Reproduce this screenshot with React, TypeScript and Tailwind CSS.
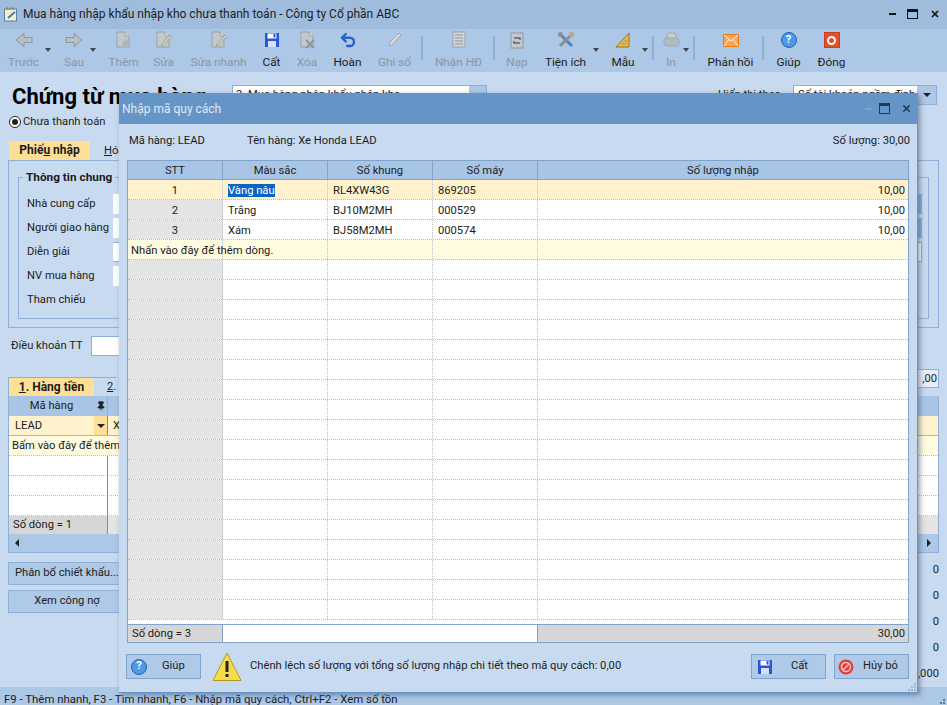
import { Pin, Undo2, X } from 'lucide-react';

const font = { fontFamily: 'Roboto, sans-serif' };

function Tool({ icon, label, off, caret, className }: { icon: React.ReactNode; label: string; off?: boolean; caret?: boolean; className: string }) {
  return (
    <div className={`relative flex h-[40px] shrink-0 flex-col items-center justify-between ${className} ${off ? 'text-[#8996a5]' : 'text-[#1c1c1c]'}`}>
      <div className="flex h-[20px] items-center">{icon}</div>
      <span className="text-[11.8px] leading-[16px] whitespace-nowrap">{label}</span>
      {caret && <span className="absolute top-[18px] right-[-13px] h-0 w-0 border-x-[3px] border-t-[4px] border-x-transparent border-t-[#444]" />}
    </div>
  );
}

function Sep({ className }: { className: string }) {
  return <div className={`mt-[6px] h-[24px] w-[2px] shrink-0 bg-[#8fb0d6] ${className}`} />;
}

function FloppyIcon() {
  return (
    <svg width="16" height="16" viewBox="0 0 16 16">
      <rect x="1" y="1" width="14" height="14" fill="#2b55d8" />
      <rect x="3.5" y="1.5" width="9" height="5" fill="#fff" />
      <rect x="4" y="9" width="8" height="6" fill="#d6e2f2" />
      <rect x="9.5" y="2" width="2" height="3.5" fill="#2b55d8" />
    </svg>
  );
}

function BlockArrow({ right }: { right?: boolean }) {
  return (
    <svg width="18" height="16" viewBox="0 0 18 16" className={right ? '' : '-scale-x-100'}>
      <path d="M1 5.5 H9 V1.5 L17 8 L9 14.5 V10.5 H1 Z" fill="#b9bfc2" stroke="#8d979d" strokeWidth="1" />
    </svg>
  );
}

function PageIcon({ badge }: { badge?: 'plus' | 'pen' | 'x' }) {
  return (
    <svg width="17" height="18" viewBox="0 0 17 18">
      <path d="M2 1 H10 L14 5 V16 H2 Z" fill="#c3c8cb" stroke="#99a2a7" />
      <path d="M10 1 V5 H14" fill="#e3e6e8" stroke="#99a2a7" />
      {badge === 'plus' && <circle cx="11.5" cy="13" r="4" fill="#aeb6ba" />}
      {badge === 'pen' && <path d="M7 13 L15 4 L16.5 5.5 L8.5 14.5 L6.5 15 Z" fill="#e1d9a8" stroke="#99a2a7" />}
      {badge === 'x' && <path d="M7 9 L15 17 M15 9 L7 17" stroke="#8f979c" strokeWidth="2" />}
    </svg>
  );
}

function HelpIcon() {
  return (
    <span className="flex h-[16px] w-[16px] items-center justify-center rounded-full border border-[#1f5fb8] bg-[#4f9ae8] text-[11px] font-bold text-white">?</span>
  );
}

const rows = [
  { stt: '1', mau: 'Vàng nâu', khung: 'RL4XW43G', may: '869205', sl: '10,00' },
  { stt: '2', mau: 'Trắng', khung: 'BJ10M2MH', may: '000529', sl: '10,00' },
  { stt: '3', mau: 'Xám', khung: 'BJ58M2MH', may: '000574', sl: '10,00' },
];

const dotted = 'border-b border-dotted border-b-[#bdbdbd]';
const dottedR = 'border-r border-dotted border-r-[#bdbdbd]';

function Dialog() {
  return (
    <div className="absolute top-[93px] left-[119px] flex h-[600px] w-[799px] flex-col border-r border-b border-[#6595c6] bg-[#c8daf0] shadow-[2px_2px_5px_rgba(60,80,110,0.55)]">
      <div className="flex h-[31px] shrink-0 items-center bg-[#6595c6] pr-[5px] pl-[3px] text-[#e0e8f2]">
        <span className="text-[12px]">Nhập mã quy cách</span>
        <div className="ml-auto flex items-center text-[#26384c]">
          <div className="h-[2px] w-[7px] bg-[#7fa3cb]" />
          <div className="ml-[7px] h-[11px] w-[11px] border border-t-[3px] border-[#26384c]" />
          <X size={11} strokeWidth={3.5} className="ml-[11px]" />
        </div>
      </div>

      <div className="flex h-[36px] shrink-0 items-center justify-between pr-[7px] pb-[2px] pl-[10px] text-[#1c1c1c]">
        <div className="flex">
          <span className="w-[118px]">Mã hàng: LEAD</span>
          <span>Tên hàng: Xe Honda LEAD</span>
        </div>
        <span>Số lượng: 30,00</span>
      </div>

      <div className="mx-[8px] flex h-[483px] w-[782px] flex-col border border-[#7fa3cb] bg-white text-[#1c1c1c]">
        <div className="flex h-[19px] shrink-0 border-b border-[#7fa3cb] bg-[#a9c5e6]">
          <div className="w-[95px] border-r border-[#7fa3cb] text-center leading-[20px]">STT</div>
          <div className="w-[105px] border-r border-[#7fa3cb] text-center leading-[20px]">Màu sắc</div>
          <div className="w-[105px] border-r border-[#7fa3cb] text-center leading-[20px]">Số khung</div>
          <div className="w-[105px] border-r border-[#7fa3cb] text-center leading-[20px]">Số máy</div>
          <div className="flex-1 text-center leading-[20px]">Số lượng nhập</div>
        </div>

        <div className="flex-1 overflow-hidden">
          {rows.map((r, i) => (
            <div key={r.stt} className={`flex h-[20px] ${dotted} ${i === 0 ? 'bg-[#fff2cc]' : ''}`}>
              <div className={`w-[95px] text-center leading-[22px] ${dottedR} ${i === 0 ? '' : 'bg-[#e4e4e4]'}`}>{r.stt}</div>
              <div className={`w-[105px] pl-[5px] leading-[22px] ${dottedR}`}>
                {i === 0 ? <span className="bg-[#0a64c8] text-white">{r.mau}</span> : r.mau}
              </div>
              <div className={`w-[105px] pl-[5px] leading-[22px] ${dottedR}`}>{r.khung}</div>
              <div className={`w-[105px] pl-[5px] leading-[22px] ${dottedR}`}>{r.may}</div>
              <div className="flex-1 pr-[3px] text-right leading-[22px]">{r.sl}</div>
            </div>
          ))}
          <div className={`flex h-[20px] bg-[#fffbe0] ${dotted}`}>
            <div className={`w-[95px] pl-[3px] leading-[22px] whitespace-nowrap ${dottedR}`}>Nhấn vào đây để thêm dòng.</div>
            <div className={`w-[105px] ${dottedR}`} />
            <div className={`w-[105px] ${dottedR}`} />
            <div className={`w-[105px] ${dottedR}`} />
          </div>
          {Array.from({ length: 18 }).map((_, i) => (
            <div key={i} className={`flex h-[20px] ${dotted}`}>
              <div className={`w-[95px] bg-[#e4e4e4] ${dottedR}`} />
              <div className={`w-[105px] ${dottedR}`} />
              <div className={`w-[105px] ${dottedR}`} />
              <div className={`w-[105px] ${dottedR}`} />
            </div>
          ))}
        </div>

        <div className="flex h-[18px] shrink-0 border-t border-[#7fa3cb] leading-[18px]">
          <div className="w-[95px] border-r border-[#7fa3cb] bg-[#d6d6d6] pl-[4px]">Số dòng = 3</div>
          <div className="w-[315px] border-r border-[#7fa3cb]" />
          <div className="flex-1 bg-[#d6d6d6] pr-[3px] text-right">30,00</div>
        </div>
      </div>

      <div className="flex flex-1 items-center pr-[8px] pb-[2px] pl-[7px] text-[#1c1c1c]">
        <button className="flex h-[25px] w-[75px] items-center border border-[#7fa3cb] bg-[#afc9e8] pl-[4px]">
          <HelpIcon />
          <span className="ml-[15px]">Giúp</span>
        </button>
        <svg width="30" height="30" viewBox="0 0 30 30" className="ml-[11px]">
          <path d="M15 1 L29 28.5 L1 28.5 Z" fill="#f7dc4a" stroke="#b89a20" strokeWidth="1" />
          <rect x="13.5" y="9" width="3" height="11" fill="#222" />
          <rect x="13.5" y="22" width="3" height="3" fill="#222" />
        </svg>
        <span className="ml-[8px]">Chênh lệch số lượng với tổng số lượng nhập chi tiết theo mã quy cách: 0,00</span>
        <button className="ml-auto flex h-[25px] w-[75px] items-center border border-[#7fa3cb] bg-[#afc9e8] pl-[5px]">
          <FloppyIcon />
          <span className="ml-[18px]">Cất</span>
        </button>
        <button className="ml-[8px] flex h-[25px] w-[75px] items-center border border-[#7fa3cb] bg-[#afc9e8] pl-[3px]">
          <svg width="16" height="16" viewBox="0 0 16 16">
            <circle cx="8" cy="8" r="7.5" fill="#e0403c" />
            <circle cx="8" cy="8" r="4.5" fill="none" stroke="#f6c0bc" strokeWidth="1.5" />
            <path d="M5 11 L11 5" stroke="#f6c0bc" strokeWidth="1.5" />
          </svg>
          <span className="ml-[9px]">Hủy bỏ</span>
        </button>
      </div>
      <div className="absolute right-[1px] bottom-[1px] grid grid-cols-3 gap-[1px]">
        {[0, 0, 1, 0, 1, 1, 1, 1, 1].map((v, i) => (
          <span key={i} className={`h-[2px] w-[2px] ${v ? 'bg-[#9db6d3]' : ''}`} />
        ))}
      </div>
    </div>
  );
}

export default function App() {
  return (
    <div style={font} className="relative flex h-[705px] w-[947px] flex-col overflow-hidden bg-[#c8daf0] text-[11.2px] text-[#1c1c1c]">
      {/* Thanh tiêu đề */}
      <div className="flex h-[29px] shrink-0 items-center bg-[#a0bcdc] pr-[7px] pb-[2px] pl-[3px]">
        <svg width="16" height="16" viewBox="0 0 16 16">
          <rect x="1.5" y="3" width="12" height="12" fill="#f4efc8" stroke="#5a7fa8" />
          <path d="M4 1v3M7 1v3M10 1v3" stroke="#c56a20" />
          <path d="M5 12 L12 6" stroke="#3c7bd0" strokeWidth="2" />
        </svg>
        <span className="ml-[4px] text-[12px]">Mua hàng nhập khẩu nhập kho chưa thanh toán - Công ty Cổ phần ABC</span>
        <div className="ml-auto flex items-center text-[#111]">
          <div className="h-[2px] w-[7px] bg-[#111]" />
          <div className="ml-[11px] h-[10px] w-[11px] border border-t-[3px] border-[#111]" />
          <X size={10} strokeWidth={4} className="ml-[12px]" />
        </div>
      </div>

      {/* Thanh công cụ */}
      <div className="flex h-[43px] shrink-0 items-start bg-[#adc7e6] pt-[1px] pl-[9px]">
        <Tool className="w-[29px]" off caret label="Trước" icon={<BlockArrow />} />
        <Tool className="ml-[27px] w-[18px]" off caret label="Sau" icon={<BlockArrow right />} />
        <Tool className="ml-[26px] w-[29px]" off label="Thêm" icon={<PageIcon badge="plus" />} />
        <Tool className="ml-[16px] w-[19px]" off label="Sửa" icon={<PageIcon badge="pen" />} />
        <Tool className="ml-[18px] w-[55px]" off label="Sửa nhanh" icon={<PageIcon badge="pen" />} />
        <Tool className="ml-[17px] w-[17px]" label="Cất" icon={<FloppyIcon />} />
        <Tool className="ml-[17px] w-[20px]" off label="Xóa" icon={<PageIcon badge="x" />} />
        <Tool className="ml-[16px] w-[29px]" label="Hoàn" icon={<Undo2 size={18} strokeWidth={3.2} className="text-[#2a62c4]" />} />
        <Tool className="ml-[16px] w-[33px]" off label="Ghi sổ" icon={
          <svg width="16" height="18" viewBox="0 0 16 18">
            <path d="M2 15 L3 11 L12 2 L14 4 L5 14 Z" fill="#d6d9da" stroke="#a0a8ad" />
          </svg>
        } />
        <Sep className="ml-[10px]" />
        <Tool className="ml-[11px] w-[49px]" off label="Nhận HĐ" icon={
          <svg width="16" height="18" viewBox="0 0 16 18">
            <rect x="2" y="1" width="12" height="15" fill="#d3d6d8" stroke="#99a2a7" />
            <path d="M4 4 H12 M4 7 H12 M4 10 H12 M4 13 H12" stroke="#8b9398" />
          </svg>
        } />
        <Sep className="ml-[10px]" />
        <Tool className="ml-[11px] w-[22px]" off label="Nạp" icon={
          <svg width="14" height="17" viewBox="0 0 14 17">
            <rect x="1" y="1" width="12" height="15" fill="#c3c8cb" stroke="#8d979d" />
            <path d="M4 6 H10 V8 M10 11 H4 V9" fill="none" stroke="#5f686e" strokeWidth="1.5" />
          </svg>
        } />
        <Tool className="ml-[17px] w-[41px]" caret label="Tiện ích" icon={
          <svg width="18" height="18" viewBox="0 0 18 18">
            <path d="M3 3 L15 15" stroke="#4f87c4" strokeWidth="3" />
            <path d="M15 3 L3 15" stroke="#8b8f92" strokeWidth="3" />
            <circle cx="14.5" cy="3.5" r="2.5" fill="#b9a878" />
            <circle cx="3.5" cy="3.5" r="2.5" fill="#8b8f92" />
          </svg>
        } />
        <Tool className="ml-[25px] w-[24px]" caret label="Mẫu" icon={
          <svg width="16" height="16" viewBox="0 0 16 16">
            <path d="M14 1 V15 H1 Z" fill="#e8b84a" stroke="#9c7420" />
            <path d="M11 8 V12 H7 Z" fill="#adc7e6" stroke="#9c7420" strokeWidth="0.5" />
          </svg>
        } />
        <Sep className="ml-[17px]" />
        <Tool className="ml-[12px] w-[10px]" off caret label="In" icon={
          <svg width="17" height="16" viewBox="0 0 17 16" className="shrink-0">
            <rect x="4" y="1" width="9" height="6" rx="2" fill="#c9ced0" stroke="#a0a8ad" />
            <rect x="1" y="6" width="15" height="8" rx="3" fill="#b3babd" stroke="#a0a8ad" />
          </svg>
        } />
        <Sep className="ml-[17px]" />
        <Tool className="ml-[12px] w-[47px]" label="Phản hồi" icon={
          <svg width="16" height="13" viewBox="0 0 16 13">
            <rect x="0.5" y="0.5" width="15" height="12" fill="#f8a653" stroke="#e57a1f" />
            <path d="M1 1 L8 7 L15 1 M1 12 L6 5.5 M15 12 L10 5.5" fill="none" stroke="#fff2df" />
          </svg>
        } />
        <Sep className="ml-[8px]" />
        <Tool className="ml-[12px] w-[25px]" label="Giúp" icon={<HelpIcon />} />
        <Tool className="ml-[16px] w-[29px]" label="Đóng" icon={
          <span className="flex h-[16px] w-[16px] items-center justify-center border border-[#c8401f] bg-[#e2502c]">
            <span className="h-[9px] w-[9px] rounded-full border-2 border-white" />
          </span>
        } />
      </div>

      {/* Nội dung chứng từ phía sau hộp thoại */}
      <div className="flex h-[41px] shrink-0 items-start pt-[13px] pr-[10px] pl-[12px]">
        <span className="w-[220px] text-[22px] leading-[24px] font-bold whitespace-nowrap text-black">Chứng từ mua hàng</span>
        <div className="flex h-[20px] w-[255px] border border-[#8fb0d6] bg-white">
          <span className="flex-1 pl-[3px] leading-[18px]">3. Mua hàng nhập khẩu nhập kho</span>
          <span className="w-[17px] bg-[#adc7e6]" />
        </div>
        <div className="ml-auto flex items-center">
          <span className="whitespace-nowrap">Hiển thị theo</span>
          <div className="ml-[12px] flex h-[20px] w-[144px] border border-[#8fb0d6] bg-white">
            <span className="flex-1 pl-[4px] leading-[18px]">Số tài khoản ngầm định</span>
            <span className="flex w-[19px] items-center justify-center bg-[#adc7e6]">
              <span className="h-0 w-0 border-x-[4px] border-t-[4px] border-x-transparent border-t-[#222]" />
            </span>
          </div>
        </div>
      </div>

      <div className="flex h-[18px] shrink-0 items-center pl-[9px]">
        <span className="flex h-[12px] w-[12px] items-center justify-center rounded-full border border-[#222] bg-white">
          <span className="h-[6px] w-[6px] rounded-full bg-[#222]" />
        </span>
        <span className="ml-[2px]">Chưa thanh toán</span>
      </div>

      <div className="mt-[10px] flex h-[19px] shrink-0 pl-[9px]">
        <div className="w-[81px] bg-[#fedf97] text-center text-[12px] leading-[19px] font-bold">Phiế<u>u</u> nhập</div>
        <div className="pl-[14px] leading-[19px]"><u>H</u>óa đơn</div>
      </div>

      <div className="mx-[8px] h-[168px] shrink-0 border border-[#8fb0d6] px-[9px] pt-[8px]">
        <fieldset className="h-[150px] border border-[#8fb0d6] pr-[6px] pl-[8px]">
          <legend className="-ml-[4px] px-[3px] text-[11.8px] leading-[16px] font-bold">Thông tin chung</legend>
          <div className="flex flex-col gap-[4px] pt-[9px]">
            {['Nhà cung cấp', 'Người giao hàng', 'Diễn giải', 'NV mua hàng', 'Tham chiếu'].map((l, i) => (
              <div key={l} className="flex h-[20px] items-center">
                <span className="w-[86px] whitespace-nowrap">{l}</span>
                {i < 2 && <div className="flex h-[20px] flex-1 justify-end bg-white"><span className="w-[5px] bg-[#8fb0d6]" /></div>}
                {i === 2 && <div className="h-[20px] flex-1 border-y border-r border-[#8fb0d6] bg-white" />}
                {i === 3 && <div className="h-[20px] w-[40px] bg-white" />}
              </div>
            ))}
          </div>
        </fieldset>
      </div>

      <div className="flex h-[28px] shrink-0 items-end pl-[11px]">
        <span className="w-[80px] leading-[20px] whitespace-nowrap">Điều khoản TT</span>
        <div className="h-[20px] w-[60px] border border-[#8fb0d6] bg-white" />
      </div>

      <div className="mt-[13px] mr-[8px] ml-[8px] flex h-[27px] shrink-0 items-start justify-between">
        <div className="mt-[8px] flex h-[19px] border-t border-l border-[#8fb0d6]">
          <div className="w-[85px] bg-[#fedf97] text-center text-[12px] leading-[18px] font-bold"><u>1</u>. Hàng tiền</div>
          <div className="pl-[13px] leading-[18px]"><u>2</u>.</div>
        </div>
        <div className="h-[19px] w-[22px] border border-[#8fb0d6] bg-[#e8eef5] pr-[1px] text-right leading-[17px]">,00</div>
      </div>

      <div className="mx-[8px] flex h-[157px] shrink-0 flex-col border border-t-0 border-[#8fb0d6]">
        <div className="flex h-[20px] shrink-0 bg-[#a9c5e6]">
          <span className="w-[85px] text-center leading-[20px]">Mã hàng</span>
          <span className="flex w-[14px] items-center justify-center border-r border-[#8fb0d6]"><Pin size={10} fill="#222" /></span>
        </div>
        <div className="flex h-[20px] shrink-0 border-b border-[#b5b5b5] bg-[#fff2cc]">
          <span className="w-[85px] pl-[6px] leading-[20px]">LEAD</span>
          <span className="flex w-[14px] items-center justify-center border-r border-[#8a8a8a] bg-[#fedf97]">
            <span className="h-0 w-0 border-x-[4px] border-t-[4px] border-x-transparent border-t-[#222]" />
          </span>
          <span className="pl-[5px] leading-[20px]">X</span>
        </div>
        <div className={`h-[20px] shrink-0 bg-[#fffbe0] pl-[3px] leading-[19px] whitespace-nowrap ${dotted}`}>Bấm vào đây để thêm</div>
        <div className="flex-1 bg-white">
          {[0, 1, 2].map((i) => (
            <div key={i} className={`h-[20px] ${dotted}`}>
              <div className="h-[20px] w-[99px] border-r border-[#8a8a8a]" />
            </div>
          ))}
        </div>
        <div className="flex h-[18px] shrink-0 bg-[#e4e4e4] leading-[18px]">
          <span className="w-[99px] border-r border-[#8a8a8a] bg-[#d6d6d6] pl-[4px]">Số dòng = 1</span>
        </div>
        <div className="flex h-[18px] shrink-0 items-center justify-between bg-[#adc7e6] px-[6px]">
          <span className="h-0 w-0 border-y-[4px] border-r-[4px] border-y-transparent border-r-[#222]" />
          <span className="mr-[1px] h-0 w-0 border-y-[4px] border-l-[4px] border-y-transparent border-l-[#222]" />
        </div>
      </div>

      <div className="flex flex-1 justify-between pr-[8px] pl-[8px]">
        <div className="flex flex-col gap-[5px] pt-[9px]">
          <button className="flex h-[23px] w-[118px] items-center border border-[#8fb0d6] bg-[#afc9e8] pl-[6px] whitespace-nowrap">Phân bổ chiết khấu...</button>
          <button className="flex h-[23px] w-[118px] items-center justify-center border border-[#8fb0d6] bg-[#afc9e8]">Xem công nợ</button>
        </div>
        <div className="flex flex-col pt-[4px] text-right leading-[26px]">
          <span>0</span>
          <span>0</span>
          <span>0</span>
          <span>0</span>
          <span>,000</span>
        </div>
      </div>

      <div className="relative flex h-[19px] shrink-0 items-center bg-[#adc7e6] pt-[6px] pl-[4px] text-[11.4px]">
        F9 - Thêm nhanh, F3 - Tìm nhanh, F6 - Nhập mã quy cách, Ctrl+F2 - Xem số tồn
        <div className="absolute right-[2px] bottom-[2px] grid grid-cols-2 gap-[1px]">
          {[0, 1, 1, 1].map((v, i) => (
            <span key={i} className={`h-[2px] w-[2px] ${v ? 'bg-[#5f7a99]' : ''}`} />
          ))}
        </div>
      </div>

      <Dialog />
    </div>
  );
}
